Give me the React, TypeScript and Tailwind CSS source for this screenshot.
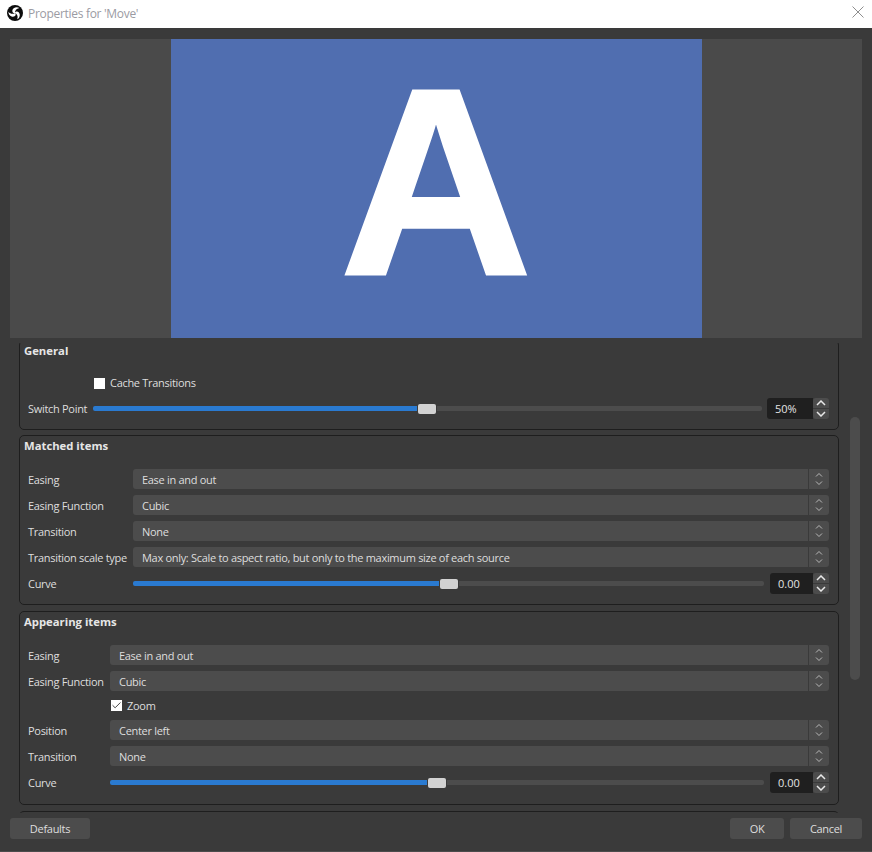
import { Check } from 'lucide-react';

const font = "font-['Open_Sans','Noto_Sans',sans-serif]";

function ObsLogo() {
  const blade = 'M12 12 C11.6 8.6 14 5 18.6 4.4 C15.8 2.6 12.4 3 10 5 C7.8 6.8 7.4 9.6 8.8 11.2 C9.7 12.2 11.2 12.6 12 12 Z';
  return (
    <svg viewBox="0 0 24 24" className="w-[16px] h-[16px] ml-[7px] mt-[-3px] shrink-0">
      <circle cx="12" cy="12" r="12" fill="#0c0c0c" />
      <path d={blade} fill="#fff" />
      <path d={blade} fill="#fff" transform="rotate(120 12 12)" />
      <path d={blade} fill="#fff" transform="rotate(240 12 12)" />
    </svg>
  );
}

function TitleBar() {
  return (
    <div className="h-[28px] bg-white flex items-center shrink-0">
      <ObsLogo />
      <span className="ml-[5px] text-[12px] text-[#9b9ba3] mt-[-1px]">Properties for 'Move'</span>
      <svg viewBox="0 0 12 12" className="w-[12px] h-[12px] ml-auto mr-[8px] mt-[-4px]">
        <path d="M0.5 0.5 L11.5 11.5 M11.5 0.5 L0.5 11.5" stroke="#8e8e8e" strokeWidth="1" fill="none" />
      </svg>
    </div>
  );
}

function Select({ value }: { value: string }) {
  return (
    <div className="flex-1 h-[20px] bg-[#4c4c4c] rounded-[3px] flex items-center">
      <span className="flex-1 pl-[9px] pt-[2px] text-[11px] text-[#dedede] whitespace-nowrap">{value}</span>
      <div className="w-[21px] h-full border-l border-[#3a3a3a] flex items-center justify-center">
        <svg viewBox="0 0 8 14" className="w-[8px] h-[14px]">
          <path d="M1 4.5 L4 1.5 L7 4.5 M1 9.5 L4 12.5 L7 9.5" stroke="#c4c4c4" strokeWidth="0.9" fill="none" />
        </svg>
      </div>
    </div>
  );
}

function Row({ label, labelW, value }: { label: string; labelW: string; value: string }) {
  return (
    <div className="flex items-center h-[20px]">
      <span className={`${labelW} shrink-0 pt-[2px] text-[11px] text-[#dedede] whitespace-nowrap`}>{label}</span>
      <Select value={value} />
    </div>
  );
}

function Spin({ value, width }: { value: string; width: string }) {
  return (
    <div className={`${width} h-[21px] shrink-0 flex`}>
      <div className="flex-1 bg-[#1f1f1f] rounded-l-[3px] flex items-center pl-[8px] pt-[1px] text-[11px] tracking-normal text-[#e4e4e4]">{value}</div>
      <div className="w-[16px] flex flex-col gap-px">
        <div className="flex-1 bg-[#4c4c4c] rounded-t-[3px] flex items-center justify-center">
          <svg viewBox="0 0 10 6" className="w-[10px] h-[6px]">
            <path d="M1 5 L5 1 L9 5" stroke="#e8e8e8" strokeWidth="1.5" fill="none" />
          </svg>
        </div>
        <div className="flex-1 bg-[#4c4c4c] rounded-b-[3px] flex items-center justify-center">
          <svg viewBox="0 0 10 6" className="w-[10px] h-[6px]">
            <path d="M1 1 L5 5 L9 1" stroke="#e8e8e8" strokeWidth="1.5" fill="none" />
          </svg>
        </div>
      </div>
    </div>
  );
}

function Slider({ fill, value, spinW, gap }: { fill: string; value: string; spinW: string; gap: string }) {
  return (
    <div className="flex items-center flex-1">
      <div className="flex items-center flex-1">
        <div className={`${fill} h-[5px] bg-[#2a7ad0] rounded-l-[2px]`} />
        <div className="w-[18px] h-[10px] mx-px bg-[#d2d2d2] rounded-[2px]" />
        <div className="flex-1 h-[5px] bg-[#4c4c4c] rounded-r-[2px]" />
      </div>
      <div className={gap} />
      <Spin value={value} width={spinW} />
    </div>
  );
}

function Group({ title, className, children }: { title: string; className: string; children: React.ReactNode }) {
  return (
    <section className={`border border-[#1e1e1e] rounded-[5px] pl-[8px] pr-[9px] shrink-0 ${className}`}>
      <h2 className="ml-[-4px] h-[22px] leading-[20px] text-[11.3px] font-bold tracking-normal text-[#e6e6e6]">{title}</h2>
      {children}
    </section>
  );
}

export default function App() {
  return (
    <div className={`w-[872px] h-[852px] bg-[#3a3a3a] flex flex-col overflow-hidden border-b border-[#4c4c4c] tracking-[-0.3px] ${font}`}>
      <TitleBar />
      {/* preview */}
      <div className="mt-[11px] mx-[10px] h-[299px] bg-[#4a4a4a] flex justify-center shrink-0">
        <div className="w-[531px] bg-[#506eb0] flex items-center justify-center pb-[14px]">
          <span className="font-['Liberation_Sans'] font-bold text-white text-[266px] leading-none tracking-normal [-webkit-text-stroke:3px_white]">A</span>
        </div>
      </div>

      <div className="mt-[5px] h-[470px] overflow-hidden flex shrink-0">
        <div className="ml-[19px] w-[820px] mt-[-3px] flex flex-col gap-[5px]">
          <Group title="General" className="h-[90px]">
            <div className="ml-[66px] mt-[13px] h-[14px] flex items-center">
              <div className="w-[11px] h-[11px] bg-white" />
              <span className="ml-[5px] text-[11px] text-[#dedede]">Cache Transitions</span>
            </div>
            <div className="mt-[8px] flex items-center h-[21px]">
              <span className="w-[65px] shrink-0 pt-[1px] text-[11px] text-[#dedede]">Switch Point</span>
              <Slider fill="w-[324px]" value="50%" spinW="w-[62px]" gap="w-[5px]" />
            </div>
          </Group>

          <Group title="Matched items" className="h-[170px]">
            <div className="mt-[11px] flex flex-col gap-[6px]">
              <Row label="Easing" labelW="w-[105px]" value="Ease in and out" />
              <Row label="Easing Function" labelW="w-[105px]" value="Cubic" />
              <Row label="Transition" labelW="w-[105px]" value="None" />
              <Row label="Transition scale type" labelW="w-[105px]" value="Max only: Scale to aspect ratio, but only to the maximum size of each source" />
            </div>
            <div className="mt-[6px] flex items-center h-[21px]">
              <span className="w-[105px] shrink-0 pt-[2px] text-[11px] text-[#dedede]">Curve</span>
              <Slider fill="w-[306px]" value="0.00" spinW="w-[59px]" gap="w-[6px]" />
            </div>
          </Group>

          <Group title="Appearing items" className="h-[194px] mt-[1px]">
            <div className="mt-[11px] flex flex-col gap-[6px]">
              <Row label="Easing" labelW="w-[82px]" value="Ease in and out" />
              <Row label="Easing Function" labelW="w-[82px]" value="Cubic" />
            </div>
            <div className="ml-[83px] h-[15px] mt-[7px] flex items-center">
              <div className="w-[11px] h-[11px] bg-white flex items-center justify-center">
                <Check size={11} strokeWidth={2} color="#333333" />
              </div>
              <span className="ml-[5px] pt-[1px] text-[11px] text-[#dedede]">Zoom</span>
            </div>
            <div className="mt-[7px] flex flex-col gap-[6px]">
              <Row label="Position" labelW="w-[82px]" value="Center left" />
              <Row label="Transition" labelW="w-[82px]" value="None" />
            </div>
            <div className="mt-[6px] flex items-center h-[21px]">
              <span className="w-[82px] shrink-0 pt-[2px] text-[11px] text-[#dedede]">Curve</span>
              <Slider fill="w-[317px]" value="0.00" spinW="w-[59px]" gap="w-[6px]" />
            </div>
          </Group>

          <div className="h-[20px] border-t border-[#1e1e1e] rounded-t-[5px] mt-[1px] shrink-0" />
        </div>
        <div className="ml-[11px] mt-[74px] w-[10px] h-[263px] bg-[#4c4c4c] rounded-[5px]" />
      </div>

      <div className="mt-[5px] mx-[10px] flex items-center gap-[6px] text-[11px] text-[#dedede]">
        <button className="w-[80px] h-[21px] pt-[1px] bg-[#4c4c4c] rounded-[3px]">Defaults</button>
        <button className="ml-auto w-[54px] h-[21px] pt-[1px] bg-[#4c4c4c] rounded-[3px]">OK</button>
        <button className="w-[72px] h-[21px] pt-[1px] bg-[#4c4c4c] rounded-[3px]">Cancel</button>
      </div>
    </div>
  );
}
